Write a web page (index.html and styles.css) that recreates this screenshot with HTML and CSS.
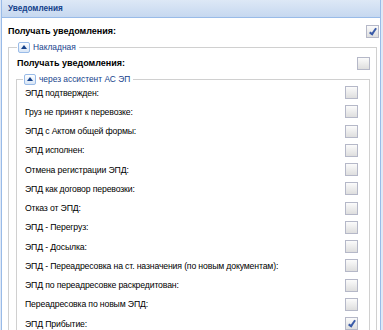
FILE: index.html
```html
<!DOCTYPE html>
<html lang="ru">
<head>
  <meta charset="UTF-8">
  <title>Уведомления</title>
  <link rel="stylesheet" href="styles.css">
</head>
<body>
  <div class="panel">
    <div class="panel-header">Уведомления</div>
    <div class="panel-body">
      <div class="row bold">
        <span>Получать уведомления:</span>
        <span class="cb checked"></span>
      </div>

      <fieldset class="fs outer">
        <legend><span class="tool"></span>Накладная</legend>
        <div class="row bold">
          <span>Получать уведомления:</span>
          <span class="cb"></span>
        </div>

        <fieldset class="fs inner">
          <legend><span class="tool"></span>через ассистент АС ЭП</legend>
          <div class="row"><span>ЭПД подтвержден:</span><span class="cb"></span></div>
          <div class="row"><span>Груз не принят к перевозке:</span><span class="cb"></span></div>
          <div class="row"><span>ЭПД с Актом общей формы:</span><span class="cb"></span></div>
          <div class="row"><span>ЭПД исполнен:</span><span class="cb"></span></div>
          <div class="row"><span>Отмена регистрации ЭПД:</span><span class="cb"></span></div>
          <div class="row"><span>ЭПД как договор перевозки:</span><span class="cb"></span></div>
          <div class="row"><span>Отказ от ЭПД:</span><span class="cb"></span></div>
          <div class="row"><span>ЭПД - Перегруз:</span><span class="cb"></span></div>
          <div class="row"><span>ЭПД - Досылка:</span><span class="cb"></span></div>
          <div class="row"><span>ЭПД - Переадресовка на ст. назначения (по новым документам):</span><span class="cb"></span></div>
          <div class="row"><span>ЭПД по переадресовке раскредитован:</span><span class="cb"></span></div>
          <div class="row"><span>Переадресовка по новым ЭПД:</span><span class="cb"></span></div>
          <div class="row"><span>ЭПД Прибытие:</span><span class="cb checked"></span></div>
        </fieldset>
      </fieldset>
    </div>
  </div>
</body>
</html>
```

FILE: styles.css
```css
body {
  margin: 0;
  background-color: #dfe8f6;
  font-family: "Liberation Sans", Arial, sans-serif;
  font-size: 8.7px;
  color: #000;
}
.panel {
  margin-left: 1px;
  width: 378px;
  height: 340px;
  border: 1px solid #99bbe8;
  border-top: none;
  background-color: #fff;
  overflow: hidden;
}
.panel-header {
  height: 17px;
  line-height: 17px;
  padding-left: 6px;
  border-bottom: 1px solid #99bbe8;
  background: linear-gradient(#dde8f6, #c6d8f0);
  color: #15428b;
  font-weight: bold;
  font-size: 8.2px;
}
.panel-body {
  padding: 3px 1px 0 6px;
}
.row {
  display: flex;
  align-items: center;
  justify-content: space-between;
  height: 19.25px;
  white-space: nowrap;
  letter-spacing: -0.15px;
}
.bold {
  height: 20px;
  font-weight: bold;
  font-size: 9px;
  letter-spacing: 0;
}
.cb {
  flex: none;
  width: 11px;
  height: 11px;
  border: 1px solid #b5b8c8;
  background: linear-gradient(#fbfbfb, #dedede);
  position: relative;
}
.cb.checked::after {
  content: "";
  position: absolute;
  left: 4px;
  top: 1px;
  width: 2px;
  height: 6px;
  border: solid #3a5ba8;
  border-width: 0 2px 2px 0;
  transform: rotate(35deg);
}
.fs {
  margin: 0;
  padding: 0 6px 0 8px;
  border: 1px solid #d0d0d0;
  border-bottom: none;
}
.outer {
  margin-right: 2px;
}
.inner {
  margin: 0 0 0 -1px;
  padding: 0 11px 0 8px;
}
legend {
  padding: 0 3px 0 1px;
  color: #15428b;
  font-size: 8.4px;
  height: 12px;
  line-height: 12px;
  display: flex;
  align-items: center;
  gap: 3px;
}
.inner legend {
  margin-left: -2px;
}
.tool {
  width: 10px;
  height: 9px;
  border: 1px solid #99bbe8;
  border-radius: 2px;
  background: linear-gradient(#fdfeff, #d9e6f6);
  position: relative;
}
.tool::after {
  content: "";
  position: absolute;
  left: 2px;
  top: 2px;
  border-left: 3px solid transparent;
  border-right: 3px solid transparent;
  border-bottom: 4px solid #15428b;
}
.inner .row:first-of-type {
  margin-top: -2px;
}
```
